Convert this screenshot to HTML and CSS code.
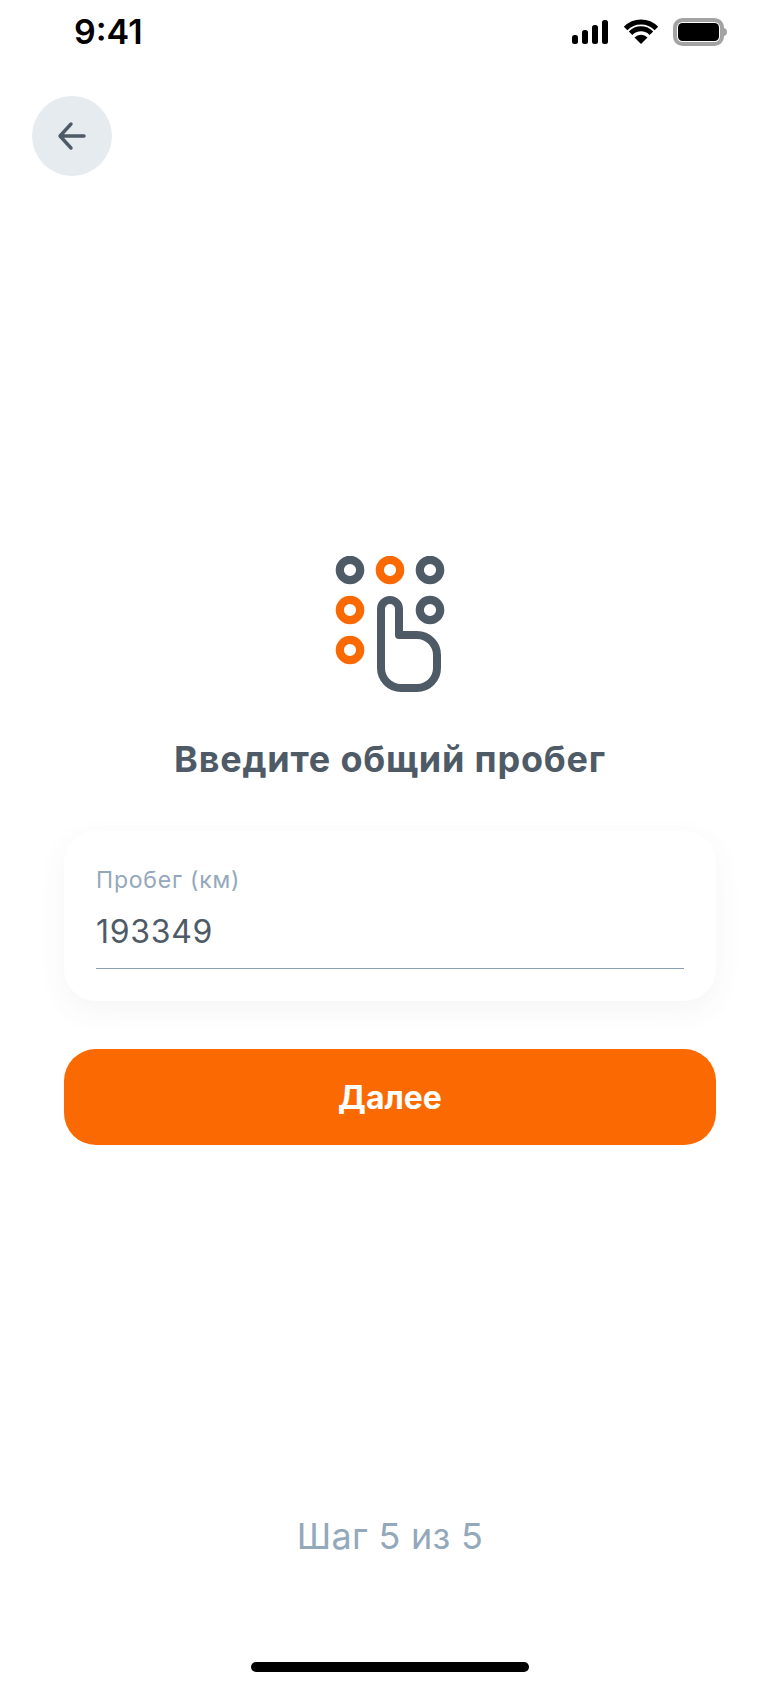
FILE: index.html
```html
<!DOCTYPE html>
<html>
<head>
	<title>Пробег</title>
	<meta charset="UTF-8">
	<link rel="stylesheet" href="styles.css">
</head>
<body>
<div class="page">
	<div class="status">
		<span class="time">9:41</span>
		<svg class="status-icons" width="158" height="30" viewBox="0 0 158 30">
			<rect x="2" y="18" width="6" height="9" rx="2.5"/>
			<rect x="12" y="13" width="6" height="14" rx="2.5"/>
			<rect x="22" y="8" width="6" height="19" rx="2.5"/>
			<rect x="32" y="3" width="6" height="24" rx="2.5"/>
			<path d="M71 27 L64.5 20.5 A9 9 0 0 1 77.5 20.5 Z"/>
			<path class="wifi-arc" d="M60.6 16.2 A14.5 14.5 0 0 1 81.4 16.2"/>
			<path class="wifi-arc" d="M55.6 11.4 A21.5 21.5 0 0 1 86.4 11.4"/>
			<rect class="batt-frame" x="105" y="3" width="47" height="24" rx="7.5"/>
			<rect x="108" y="6" width="41" height="18" rx="4.5"/>
			<path class="batt-nub" d="M154 11 C156 11.5 157 13 157 15 C157 17 156 18.5 154 19 Z"/>
		</svg>
	</div>

	<a href="javascript:;" class="back">
		<svg width="32" height="32" viewBox="0 0 32 32">
			<path d="M28 16 H5 M15 4 L4 16 L15 28"/>
		</svg>
	</a>

	<div class="main">
		<svg class="logo" width="116" height="140" viewBox="332 556 116 140">
			<circle class="dot" cx="350" cy="570" r="10.2"/>
			<circle class="dot orange" cx="390" cy="570" r="10.2"/>
			<circle class="dot" cx="430" cy="570" r="10.2"/>
			<circle class="dot orange" cx="350" cy="610" r="10.2"/>
			<circle class="dot" cx="430" cy="610" r="10.2"/>
			<circle class="dot orange" cx="350" cy="650" r="10.2"/>
			<path class="hand" d="M381 609 a9 9 0 0 1 18 0 V635 H417 a20 20 0 0 1 20 20 V668 a20 20 0 0 1 -20 20 H401 a20 20 0 0 1 -20 -20 Z"/>
		</svg>
		<h1 class="title">Введите общий пробег</h1>

		<div class="card">
			<div class="label">Пробег (км)</div>
			<div class="value">193349</div>
		</div>

		<a href="javascript:;" class="next">Далее</a>
	</div>

	<div class="step">Шаг 5 из 5</div>
	<div class="home-wrap"><div class="home"></div></div>
</div>
</body>
</html>
```

FILE: styles.css
```css
* { box-sizing: border-box; }
html, body { margin: 0; background: #fff; }
body { font-family: Inter, "Noto Sans", sans-serif; }

.page { width: 780px; height: 1688px; display: flex; flex-direction: column; overflow: hidden; }

.status { height: 64px; padding: 0 52px 0 74px; display: flex; justify-content: space-between; align-items: center; }
.time { font-size: 34px; font-weight: 600; color: #000; line-height: 64px; }
.status-icons { fill: #000; }
.wifi-arc { fill: none; stroke: #000; stroke-width: 5; }
.batt-frame { fill: none; stroke: #a3a3a3; stroke-width: 4; }
.batt-nub { fill: #a3a3a3; }

.back { width: 80px; height: 80px; margin: 32px 0 0 32px; border-radius: 50%; background: #e6ebef; display: flex; align-items: center; justify-content: center; }
.back svg { fill: none; stroke: #4e5b67; stroke-width: 3.4; stroke-linecap: round; stroke-linejoin: round; }

.main { padding: 380px 64px 0; display: flex; flex-direction: column; align-items: center; }
.logo { display: block; }
.dot { fill: none; stroke: #4e5b67; stroke-width: 8.2; }
.dot.orange { stroke: #fb6a02; }
.hand { fill: none; stroke: #4e5b67; stroke-width: 8; stroke-linejoin: round; }

.title { margin: 41px 0 0; font-size: 36px; line-height: 44px; font-weight: 700; letter-spacing: .8px; color: #4e5b67; white-space: nowrap; }

.card { width: 652px; height: 170px; margin-top: 50px; padding: 35px 32px 0; border-radius: 32px; background: #fff; box-shadow: 0 10px 30px rgba(78, 91, 103, .06); }
.label { font-size: 23px; line-height: 28px; letter-spacing: .8px; color: #94a8bc; }
.value { height: 57px; margin-top: 18px; font-size: 32px; line-height: 40px; letter-spacing: .7px; color: #4e5b67; border-bottom: 1px solid #8aa0b5; }

.next { width: 652px; height: 96px; margin-top: 48px; border-radius: 32px; background: #fb6a02; color: #fff; font-size: 32px; font-weight: 700; display: flex; align-items: center; justify-content: center; text-decoration: none; }

.step { margin-top: auto; font-size: 36px; line-height: 44px; letter-spacing: .3px; color: #94a8bc; text-align: center; }
.home-wrap { height: 130px; padding-top: 104px; display: flex; justify-content: center; }
.home { width: 278px; height: 10px; border-radius: 5px; background: #000; }
```
